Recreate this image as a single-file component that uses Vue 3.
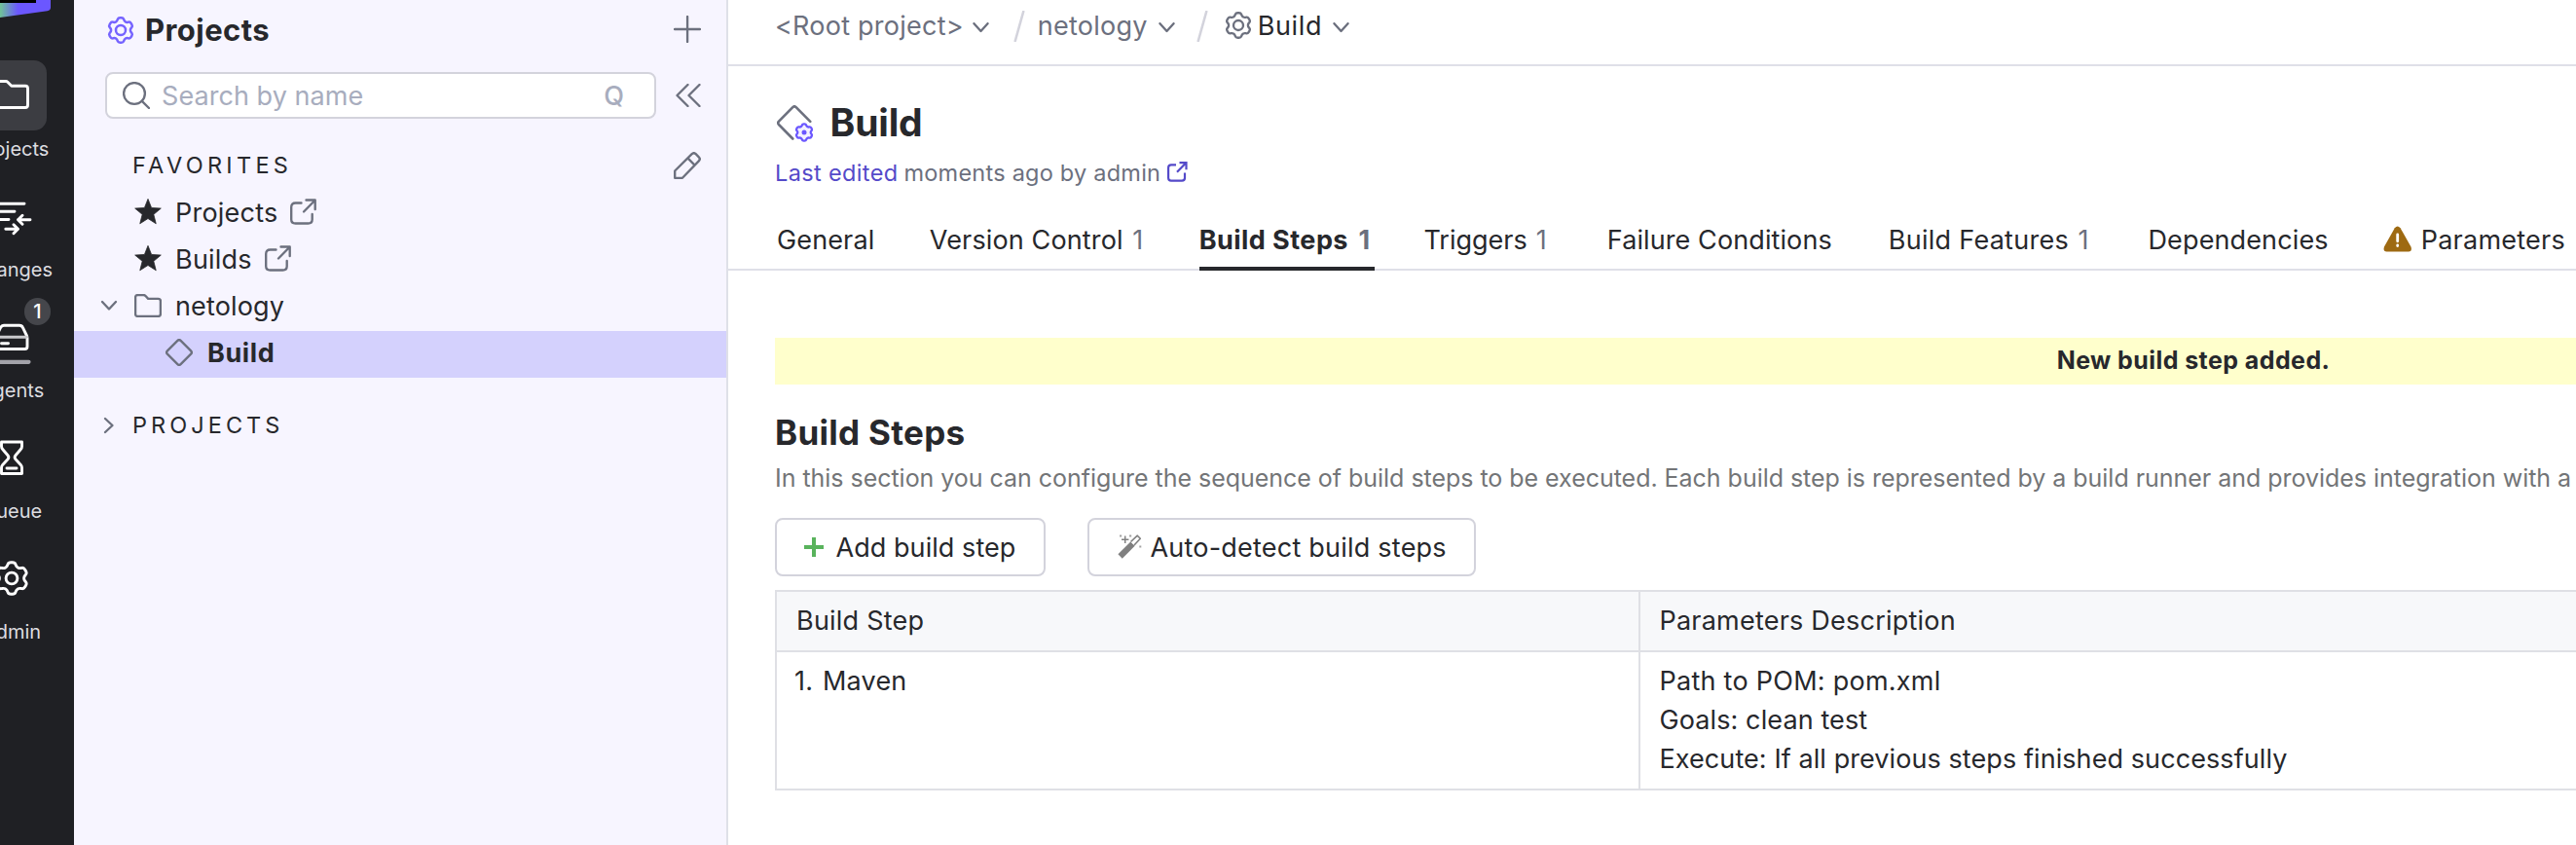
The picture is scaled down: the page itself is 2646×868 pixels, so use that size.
<script setup>
// Six-toothed cog outline centred on the origin, with softened corners.
function cog(R) {
  const pts = []
  for (let i = 0; i < 6; i++) {
    const base = -90 + i * 60
    for (const [da, r] of [[-22.5, 0.77], [-11.5, 1], [11.5, 1], [22.5, 0.77]]) {
      const a = ((base + da) * Math.PI) / 180
      pts.push([Math.cos(a) * R * r, Math.sin(a) * R * r])
    }
  }
  const n = pts.length
  const mix = (p, q, t) => [p[0] + (q[0] - p[0]) * t, p[1] + (q[1] - p[1]) * t]
  const f = (p) => `${p[0].toFixed(2)} ${p[1].toFixed(2)}`
  let d = ''
  for (let i = 0; i < n; i++) {
    const prev = pts[(i + n - 1) % n]
    const cur = pts[i]
    const next = pts[(i + 1) % n]
    d += `${i ? 'L' : 'M'}${f(mix(cur, prev, 0.38))}Q${f(cur)} ${f(mix(cur, next, 0.38))}`
  }
  return d + 'Z'
}
const cogLarge = cog(16.6)
const cogMedium = cog(13)
const cogSmall = cog(8.8)

const starPath = Array.from({ length: 10 }, (_, i) => {
  const a = ((-90 + i * 36) * Math.PI) / 180
  const r = i % 2 ? 6.1 : 14
  return `${i ? 'L' : 'M'}${(14 + r * Math.cos(a)).toFixed(2)} ${(14.4 + r * Math.sin(a)).toFixed(2)}`
}).join('') + 'Z'

const favorites = [
  { label: 'Projects' },
  { label: 'Builds' },
]
const tabs = [
  { label: 'General' },
  { label: 'Version Control', count: 1 },
  { label: 'Build Steps', count: 1, active: true },
  { label: 'Triggers', count: 1 },
  { label: 'Failure Conditions' },
  { label: 'Build Features', count: 1 },
  { label: 'Dependencies' },
  { label: 'Parameters', warn: true },
]
</script>

<template>
  <div class="page">
    <aside class="rail">
      <div class="logo">
        <svg width="128" height="22" viewBox="-52 0 128 22">
          <defs>
            <linearGradient id="lg" x1="0" y1="0" x2="1" y2="0">
              <stop offset="0" stop-color="#3fd67d" />
              <stop offset="0.36" stop-color="#6fbf9b" />
              <stop offset="0.58" stop-color="#6b57ff" />
              <stop offset="1" stop-color="#6b57ff" />
            </linearGradient>
          </defs>
          <path d="M-28 0H52V7.500Q52 10.700 48.500 11.300L-28 22Z" fill="url(#lg)" />
          <path d="M-13 0H37V3H-13Z" fill="#000" />
        </svg>
      </div>
      <nav class="rail-nav">
        <a class="rail-item">
          <span class="rail-icon on">
            <svg width="48" height="48" viewBox="-24 -24 48 48">
              <path d="M-16.500 -12.500Q-16.500 -14.500 -14.500 -14.500H-6Q-5 -14.500 -4.200 -13.700L-0.200 -9.800H14Q16.500 -9.800 16.500 -7.300V10Q16.500 12.500 14 12.500H-14Q-16.500 12.500 -16.500 10Z" />
            </svg>
          </span>
          <span class="rail-label">Projects</span>
        </a>
        <a class="rail-item">
          <span class="rail-icon">
            <svg width="48" height="48" viewBox="-24 -24 48 48">
              <path d="M-16.500 -12.700H13M-16.500 -4.700H3M-16.500 3.500H-3M6.500 3.700H19M11 -0.800L6.500 3.700L11 8.200M-6.200 13.300H6M2 8.800L6.500 13.300L2 17.800" />
            </svg>
          </span>
          <span class="rail-label">Changes</span>
        </a>
        <a class="rail-item">
          <span class="rail-icon">
            <svg width="48" height="56" viewBox="-24 -28 48 56">
              <path d="M-8 -11.700H8Q10.500 -11.700 11.500 -9.300L15.300 -1.500Q16 0 16 1.500V10Q16 12.500 13.500 12.500H-13.500Q-16 12.500 -16 10V1.500Q-16 0 -15.300 -1.500L-11.500 -9.300Q-10.500 -11.700 -8 -11.700Z" />
              <path d="M-15.500 0.200H15.500" stroke="#c9c9cc" />
              <path d="M-10.500 6.700H-3.500" />
              <path d="M-17.500 25.800H17.500" stroke="#a2a2a9" stroke-width="4.200" />
            </svg>
            <span class="badge">1</span>
          </span>
          <span class="rail-label">Agents</span>
        </a>
        <a class="rail-item">
          <span class="rail-icon">
            <svg width="48" height="48" viewBox="-24 -24 48 48">
              <path d="M-10.500 -16H10.500V-11.500Q10.500 -9.800 9.300 -8.500L4 -2.300Q2.300 -0.300 4 1.700L9.300 7.400Q10.500 8.800 10.500 10.500V16.500H-10.500V10.500Q-10.500 8.800 -9.300 7.400L-4 1.700Q-2.300 -0.300 -4 -2.300L-9.300 -8.500Q-10.500 -9.800 -10.500 -11.500ZM-5 11H5" />
            </svg>
          </span>
          <span class="rail-label">Queue</span>
        </a>
        <a class="rail-item">
          <span class="rail-icon">
            <svg width="48" height="48" viewBox="-24 -24 48 48">
              <path :d="cogLarge" /><circle r="5.900" />
            </svg>
          </span>
          <span class="rail-label">Admin</span>
        </a>
      </nav>
    </aside>

    <aside class="side">
      <header class="side-head">
        <svg class="purple" width="28" height="28" viewBox="-14 -14 28 28"><path :d="cogMedium" /><circle r="5" /></svg>
        <h2>Projects</h2>
        <svg class="line push" width="28" height="28" viewBox="0 0 28 28"><path d="M14.100 1V27M1 14H27" /></svg>
      </header>
      <div class="search-row">
        <div class="search">
          <svg class="line" width="28" height="28" viewBox="0 0 28 28"><circle cx="12" cy="12" r="10.900" /><path d="M19.800 19.800L27 27" /></svg>
          <span class="placeholder">Search by name</span>
          <span class="key">Q</span>
        </div>
        <svg class="line" width="26" height="24" viewBox="0 0 26 24"><path d="M12.500 1L1.500 12L12.500 23M24.500 1L13.500 12L24.500 23" /></svg>
      </div>

      <div class="section">
        <span>FAVORITES</span>
        <svg class="line push" width="28" height="28" viewBox="0 0 28 28">
          <path d="M1.200 19.500L18.700 2.200Q20.700 0.200 22.700 2.200L25.800 5.300Q27.800 7.300 25.800 9.300L9 26.800H1.200ZM14.700 6.700L21.300 13.300" />
        </svg>
      </div>
      <div v-for="f in favorites" :key="f.label" class="row">
        <svg width="28" height="28" viewBox="0 0 28 28"><path :d="starPath" fill="#27282c" stroke="#27282c" stroke-width="0.800" stroke-linejoin="round" /></svg>
        <span class="name">{{ f.label }}</span>
        <svg class="line ext" width="28" height="28" viewBox="0 0 28 28">
          <path d="M11.500 4.500H5.500Q1.200 4.500 1.200 8.800V21.500Q1.200 25.500 5.500 25.500H18.500Q22.700 25.500 22.700 21.500V16M14 13.500L25.300 2M16.500 1.500H25.700V11" />
        </svg>
      </div>
      <div class="row tree">
        <svg class="line" width="18" height="12" viewBox="0 0 18 12"><path d="M2 2L9 9.500L16 2" /></svg>
        <svg class="line folder" width="28" height="24" viewBox="0 0 28 24"><path d="M1.100 3.500Q1.100 1.100 3.500 1.100H9.500Q10.500 1.100 11.300 1.800L14.200 4.900H24.500Q26.900 4.900 26.900 7.300V20.500Q26.900 22.900 24.500 22.900H3.500Q1.100 22.900 1.100 20.500Z" /></svg>
        <span class="name">netology</span>
      </div>
      <div class="row selected">
        <svg class="line" width="28" height="28" viewBox="0 0 28 28"><path d="M12.400 1.900Q14 0.400 15.600 1.900L26.100 12.400Q27.600 14 26.100 15.600L15.600 26.100Q14 27.600 12.400 26.100L1.900 15.600Q0.400 14 1.900 12.400Z" /></svg>
        <span>Build</span>
      </div>
      <div class="section all">
        <svg class="line" width="12" height="18" viewBox="0 0 12 18"><path d="M2 2L9.500 9L2 16" /></svg>
        <span>PROJECTS</span>
      </div>
    </aside>

    <main class="main">
      <div class="crumbs">
        <span class="c-root">&lt;Root project&gt;</span>
        <svg class="line chev1" width="17" height="11" viewBox="0 0 17 11"><path d="M1.500 1.200L8.500 9L15.500 1.200" /></svg>
        <svg class="slash s1" width="12" height="32" viewBox="0 0 12 32"><path d="M10.200 1L1.800 31" /></svg>
        <span class="c-sub">netology</span>
        <svg class="line chev2" width="17" height="11" viewBox="0 0 17 11"><path d="M1.500 1.200L8.500 9L15.500 1.200" /></svg>
        <svg class="slash s2" width="12" height="32" viewBox="0 0 12 32"><path d="M10.200 1L1.800 31" /></svg>
        <svg class="line cog" width="28" height="28" viewBox="-14 -14 28 28"><path :d="cogMedium" /><circle r="5" /></svg>
        <span class="c-cur">Build</span>
        <svg class="line chev3" width="17" height="11" viewBox="0 0 17 11"><path d="M1.500 1.200L8.500 9L15.500 1.200" /></svg>
      </div>

      <div class="title">
        <svg width="40" height="40" viewBox="0 0 40 40">
          <path d="M16.300 34.500L2 20Q0.400 18.300 2 16.600L16.300 2.100Q18 0.500 19.700 2.100L34.300 16.800" fill="none" stroke="#6c707e" stroke-width="2.600" stroke-linecap="round" />
          <g transform="translate(28 28)"><path :d="cogSmall" fill="#f3f1ff" stroke="#6b57ff" stroke-width="2.300" /><circle r="2.500" fill="#6b57ff" /></g>
        </svg>
        <h1>Build</h1>
      </div>
      <div class="edited">
        <a>Last edited</a><span>moments ago by admin</span>
        <svg width="21" height="21" viewBox="0 0 21 21" fill="none" stroke="#544ac9" stroke-width="2.200"><path d="M9 3.300H4Q1.100 3.300 1.100 6.200V16.800Q1.100 19.700 4 19.700H15Q18 19.700 18 16.800V11.500M10 10.800L19 1.500M12.500 1.100H19.500V8.200" /></svg>
      </div>

      <nav class="tabs">
        <a v-for="t in tabs" :key="t.label" class="tab" :class="{ active: t.active }">
          <svg v-if="t.warn" class="warn" width="30" height="28" viewBox="0 0 30 28">
            <path d="M11.800 2.300Q14.700 -1.200 17.600 2.300L28.500 21.500Q30 26.300 26 26.500H3.500Q-0.500 26.300 1 21.500Z" fill="#9e6a12" />
            <path d="M14.700 9V15.800M14.700 20V20.600" stroke="#fff" stroke-width="2.800" stroke-linecap="round" />
          </svg>
          <span>{{ t.label }}</span>
          <span v-if="t.count" class="count">{{ t.count }}</span>
        </a>
      </nav>

      <section class="content">
        <div class="banner">New build step added.</div>
        <h2 class="heading">Build Steps</h2>
        <p class="desc">In this section you can configure the sequence of build steps to be executed. Each build step is represented by a build runner and provides integration with a</p>
        <div class="actions">
          <button class="btn add">
            <svg width="20" height="20" viewBox="0 0 20 20"><path d="M10 0V20M0 10H20" stroke="#59b35c" stroke-width="4" /></svg>
            <span>Add build step</span>
          </button>
          <button class="btn auto">
            <svg width="26" height="28" viewBox="0 0 26 28">
              <path d="M3.600 23.500L16.500 10.600" stroke="#808080" stroke-width="6.200" />
              <path d="M14.500 8.500L21.300 2.200L24.300 5.200L18 12" fill="#fff" stroke="#808080" stroke-width="1.600" stroke-linejoin="round" />
              <path d="M8.700 2.500V10M5 6.200H12.400" stroke="#808080" stroke-width="1.500" />
              <path d="M3 2.500H5.200M13 2.500H15.200M23.300 13.500H25.300" stroke="#a3a3a3" stroke-width="2" />
            </svg>
            <span>Auto-detect build steps</span>
          </button>
        </div>
        <div class="table">
          <div class="cell th">Build Step</div>
          <div class="cell th">Parameters Description</div>
          <div class="cell td step"><span class="num">1.</span><span>Maven</span></div>
          <div class="cell td">
            <div class="p1">Path to POM: pom.xml</div>
            <div class="p2">Goals: clean test</div>
            <div class="p3">Execute: If all previous steps finished successfully</div>
          </div>
        </div>
      </section>
    </main>
  </div>
</template>

<style>
body { margin: 0; overflow: hidden; }
</style>

<style scoped>
.page { display: flex; width: 2646px; height: 868px; overflow: hidden; background: #fff; color: #27282c; font-family: Inter, "Liberation Sans", sans-serif; font-size: 27px; white-space: nowrap; }
.page * { box-sizing: border-box; }
h1, h2, p { margin: 0; }
svg { flex: none; display: block; }
.line { fill: none; stroke: #6c707e; stroke-width: 2.35; stroke-linecap: round; stroke-linejoin: round; }
.purple { fill: none; stroke: #7563ff; stroke-width: 2.5; }
.push { margin-left: auto; }

.rail { flex: none; width: 128px; margin-left: -52px; background: #1f2024; }
.logo { height: 62px; }
.rail-item { display: flex; flex-direction: column; align-items: center; height: 124px; }
.rail-icon { position: relative; display: flex; align-items: center; justify-content: center; width: 72px; height: 72px; border-radius: 13px; }
.rail-icon.on { background: #3c3d42; }
.rail-icon svg { fill: none; stroke: #fff; stroke-width: 2.9; stroke-linecap: round; stroke-linejoin: round; }
.rail-label { margin-top: 5px; font-size: 20px; line-height: 28px; color: #dddde0; }
.badge { position: absolute; left: 49px; top: -4px; width: 27px; height: 28px; border-radius: 14px; background: #45464b; color: #fff; font-size: 20px; line-height: 28px; text-align: center; font-weight: 500; }

.side { flex: none; width: 672px; background: #f7f5ff; border-right: 2px solid #dfe0e8; }
.side-head { display: flex; align-items: center; height: 61px; padding: 0 26px 0 34px; }
.side-head h2 { margin-left: 11px; font-size: 31px; font-weight: 650; letter-spacing: .45px; line-height: 36px; }
.side-head .push { position: relative; top: -1px; }
.search-row { display: flex; align-items: center; margin-top: 13px; padding: 0 26px 0 32px; justify-content: space-between; }
.search { display: flex; align-items: center; width: 566px; height: 48px; padding: 0 31px 0 16px; border: 2px solid #d3d3dc; border-radius: 8px; background: #fff; color: #a8adbe; }
.placeholder { margin-left: 12px; padding-top: 1px; letter-spacing: .06px; }
.key { margin-left: auto; font-weight: 500; }
.section { display: flex; align-items: center; height: 48px; margin: 24px 0 2px; padding: 0 26px 0 60px; font-size: 23.5px; }
.section span { padding-bottom: 2px; letter-spacing: 4.3px; }
.section.all { margin-top: 25px; padding-left: 30px; }
.section.all span { margin-left: 18px; letter-spacing: 4.05px; }
.row { display: flex; align-items: center; height: 48px; padding: 0 0 4px 62px; }
.name { margin-left: 14px; letter-spacing: .22px; }
.ext { margin-left: 13px; }
.tree { padding-left: 27px; }
.tree .name { letter-spacing: .15px; }
.folder { margin-left: 17px; }
.selected { padding-left: 94px; background: #d4d1fd; font-weight: 650; }
.selected span { margin-left: 15px; letter-spacing: .6px; }

.main { flex: 1; min-width: 0; overflow: hidden; }
.crumbs { display: flex; align-items: center; height: 68px; padding: 0 0 14px 48px; border-bottom: 2px solid #dfe0e8; color: #6c707e; }
.slash { fill: none; stroke: #d3d3dc; stroke-width: 2.6; stroke-linecap: round; }
.c-root { letter-spacing: .24px; }
.c-sub { letter-spacing: .25px; margin-left: 13px; }
.c-cur { letter-spacing: .6px; margin-left: 5.5px; color: #27282c; }
.chev1 { margin: 4px 0 0 9.5px; }
.chev2 { margin: 4px 0 0 11px; }
.chev3 { margin: 4px 0 0 11px; }
.s1 { margin: 2px 0 0 24.5px; }
.s2 { margin: 2px 0 0 22.5px; }
.cog { margin-left: 17px; }
.title { display: flex; align-items: center; height: 48px; margin: 34px 0 0 50px; }
.title h1 { margin-left: 14.5px; font-size: 39px; font-weight: 650; line-height: 48px; letter-spacing: -.15px; }
.title svg { margin-top: 4px; }
.edited { display: flex; align-items: center; height: 35px; margin: 10px 0 0 48px; font-size: 23.5px; color: #6c707e; }
.edited a { color: #544ac9; letter-spacing: .36px; }
.edited span { margin-left: 6px; letter-spacing: .23px; }
.edited svg { margin: -3px 0 0 7px; }

.tabs { display: flex; width: 1900px; height: 64px; margin-top: 19px; padding-left: 50px; box-shadow: inset 0 -2px #dfe0e8; }
.tab { position: relative; display: flex; align-items: center; letter-spacing: .13px; }
.tab + .tab { margin-left: 58px; }
.tab + .tab:nth-child(2) { margin-left: 56.5px; }
.tab + .tab:nth-child(3) { margin-left: 55.5px; }
.tab + .tab:nth-child(4) { margin-left: 54px; letter-spacing: 0; }
.tab + .tab:nth-child(5) { margin-left: 60px; letter-spacing: .1px; }
.tab:nth-child(6) { letter-spacing: .27px; }
.tab + .tab:nth-child(7) { margin-left: 59px; }
.tab + .tab:nth-child(8) { margin-left: 56px; letter-spacing: .24px; }
.count { width: 13px; margin-left: 9px; color: #6c707e; letter-spacing: 0; }
.tab:nth-child(2) .count { margin-left: 9.5px; }
.tab:nth-child(6) .count { margin-left: 9.5px; }
.active { font-weight: 650; letter-spacing: .46px; }
.active .count { margin-left: 10.5px; }
.active::after { content: ""; position: absolute; left: 0; right: -3.5px; bottom: 0; height: 4px; background: #27282c; }
.warn { margin-right: 9px; }

.content { width: 2960px; padding: 69px 0 0 48px; }
.banner { display: flex; align-items: center; justify-content: center; height: 48px; padding-bottom: 2px; padding-left: 2px; background: #ffffcc; font-size: 25px; font-weight: 650; letter-spacing: .42px; }
.heading { margin-top: 28px; height: 44px; line-height: 43px; font-size: 35px; font-weight: 650; letter-spacing: .3px; }
.desc { margin-top: 8px; height: 32px; line-height: 32px; font-size: 25px; letter-spacing: -.031px; color: #737577; }
.actions { display: flex; gap: 43.5px; margin-top: 25px; }
.btn { display: flex; align-items: center; height: 60px; border: 2px solid #d3d3dc; border-radius: 8px; background: #fff; color: inherit; font: inherit; }
.add { width: 277.500px; padding: 0 0 0 28px; letter-spacing: .06px; }
.add span { margin-left: 12.500px; }
.auto { width: 399px; padding: 0 0 0 28px; letter-spacing: .22px; }
.auto span { margin-left: 8.500px; }
.table { display: grid; grid-template-columns: 887px 1fr; margin-top: 14px; border: solid #dfe0e5; border-width: 2px 0 0 2px; }
.cell { border: solid #dfe0e5; border-width: 0 2px 2px 0; padding-left: 20px; line-height: 40px; }
.cell:nth-child(even) { padding-left: 19.500px; }
.th { height: 62px; line-height: 60px; background: #f7f8fa; letter-spacing: .22px; }
.td { height: 142px; padding-top: 10px; }
.step { display: flex; padding-left: 18px; letter-spacing: .2px; }
.num { width: 29px; }
.p1 { letter-spacing: .26px; }
.p2 { letter-spacing: .1px; }
.p3 { letter-spacing: .08px; }
</style>
